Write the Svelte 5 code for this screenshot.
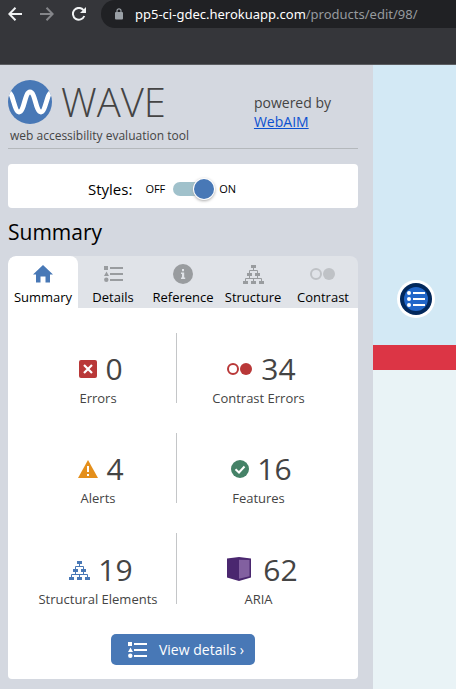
<script>
  const tabs = [
    { id: 'home', label: 'Summary' },
    { id: 'list', label: 'Details' },
    { id: 'info', label: 'Reference' },
    { id: 'tree', label: 'Structure' },
    { id: 'contrast', label: 'Contrast' }
  ];
  const stats = [
    { icon: 'error', value: 0, label: 'Errors' },
    { icon: 'contrast', value: 34, label: 'Contrast Errors' },
    { icon: 'alert', value: 4, label: 'Alerts' },
    { icon: 'feature', value: 16, label: 'Features' },
    { icon: 'tree', value: 19, label: 'Structural Elements' },
    { icon: 'aria', value: 62, label: 'ARIA' }
  ];
  let active = $state('home');
  let styles = $state(true);
</script>

{#snippet icon(name)}
  {#if name === 'home'}
    <svg width="20" height="18" viewBox="0 0 20 18" aria-hidden="true"><path fill="currentColor" d="M10 0 20 9.500H17V17.500H12.500V11.500H7.500V17.500H3V9.500H0Z" /></svg>
  {:else if name === 'list'}
    <svg width="19" height="16" viewBox="0 0 19 16" aria-hidden="true"><path fill="currentColor" d="M0 0H4V4H0ZM2.500 5.500 5 10H0ZM6 1H19V3H6ZM6 7H19V9H6ZM6 13H19V15H6Z" /><circle cx="2.300" cy="13.800" r="2.200" fill="currentColor" /></svg>
  {:else if name === 'info'}
    <svg width="20" height="20" viewBox="0 0 20 20" aria-hidden="true"><circle cx="10" cy="10" r="10" fill="currentColor" /><path fill="#e0e3e8" d="M9 5H11V7.300H9ZM8 8.500H11.200V13.500H12.200V15H8V13.500H9V10H8Z" /></svg>
  {:else if name === 'tree'}
    <svg width="21" height="19" viewBox="0 0 21 19" aria-hidden="true"><path fill="currentColor" d="M8 0H13V3H8ZM4 8H9V11H4ZM12 8H17V11H12ZM0 16H5V19H0ZM8 16H13V19H8ZM16 16H21V19H16Z" /><path fill="none" stroke="currentColor" d="M10.500 3V5.500M6.500 8V5.500H14.500V8M6.500 11V13.500M14.500 11V13.500M2.500 16V13.500H18.500V16M10.500 13.500V16" /></svg>
  {:else if name === 'contrast'}
    <svg width="26" height="12" viewBox="0 0 26 12" aria-hidden="true"><circle cx="6" cy="6" r="5" fill="none" stroke="currentColor" stroke-width="2" /><circle cx="19" cy="6" r="6" fill="currentColor" /></svg>
  {:else if name === 'error'}
    <svg width="18" height="18" viewBox="0 0 18 18" aria-hidden="true"><rect width="18" height="18" rx="2" fill="#b93838" /><path d="M5 5 13 13M13 5 5 13" stroke="#fff" stroke-width="2.200" /></svg>
  {:else if name === 'alert'}
    <svg width="20" height="18" viewBox="0 0 20 18" aria-hidden="true"><path fill="#e48f1b" d="M10 0 20 18H0Z" /><path fill="#fff" d="M9 6H11V12H9ZM9 14H11V16H9Z" /></svg>
  {:else if name === 'feature'}
    <svg width="18" height="18" viewBox="0 0 18 18" aria-hidden="true"><circle cx="9" cy="9" r="9" fill="#458267" /><path d="M4.500 9.200 8 12.500 13.500 6.500" fill="none" stroke="#fff" stroke-width="2" /></svg>
  {:else if name === 'aria'}
    <svg width="24" height="26" viewBox="0 0 24 26" aria-hidden="true"><path fill="#4a276f" d="M0 1.500 12 0 24 1.500V20.500L12 24 0 20.500Z" /><path fill="#8260a0" d="M12 2.800 22.500 3V19.300L12 21.800Z" /></svg>
  {/if}
{/snippet}

<div class="window">
  <header class="chrome">
    <button class="nav" aria-label="Back"><svg width="14" height="14" viewBox="0 0 14 14"><path d="M14 7H1.500M7.500 .8 1.300 7 7.500 13.200" /></svg></button>
    <button class="nav off" aria-label="Forward" disabled><svg width="14" height="14" viewBox="0 0 14 14"><path d="M0 7H12.500M6.500 .8 12.700 7 6.500 13.200" /></svg></button>
    <button class="nav" aria-label="Reload"><svg width="14" height="14" viewBox="0 0 14 14"><path d="M12.300 9A5.900 5.900 0 1 1 11.500 3.200" /><path class="solid" d="M14 0V6H8Z" /></svg></button>
    <div class="address" role="textbox" aria-label="Address" aria-readonly="true" tabindex="0">
      <svg width="8" height="12" viewBox="0 0 8 12" aria-hidden="true"><path d="M2 5V2.800A2 2 0 0 1 6 2.800V5" fill="none" stroke="#9aa0a6" stroke-width="1.200" /><rect y="4" width="8" height="7.500" rx="1" fill="#9aa0a6" /></svg>
      <span class="url">pp5-ci-gdec.herokuapp.com<span class="path">/products/edit/98/</span></span>
    </div>
  </header>

  <div class="body">
    <aside class="wave">
      <div class="brand">
        <div class="logo">
          <div class="mark">
            <svg width="44" height="44" viewBox="0 0 44 44" aria-hidden="true">
              <defs><clipPath id="disc"><circle cx="22" cy="22" r="22" /></clipPath></defs>
              <circle cx="22" cy="22" r="22" fill="#4878b6" />
              <path clip-path="url(#disc)" d="M-1 13H1C5 13 6.500 32 11 32C16.500 32 16.500 12 22 12C27.500 12 27.500 32 33 32C37.500 32 39 13 43 13H45" fill="none" stroke="#fff" stroke-width="4.800" />
            </svg>
            <span class="name">WAVE</span>
          </div>
          <span class="tag">web accessibility evaluation tool</span>
        </div>
        <p class="powered">powered by<br /><a href="#webaim">WebAIM</a></p>
      </div>

      <div class="switch">
        <label class="title" for="styles">Styles:</label>
        <span class="state">OFF</span>
        <input id="styles" type="checkbox" role="switch" bind:checked={styles} />
        <span class="state">ON</span>
      </div>

      <h2>Summary</h2>

      <div class="tabs" role="tablist">
        {#each tabs as tab}
          <button role="tab" class="tab {tab.id}" class:active={active === tab.id} aria-selected={active === tab.id} onclick={() => (active = tab.id)}>
            <span class="glyph">{@render icon(tab.id)}</span>
            {tab.label}
          </button>
        {/each}
      </div>

      <section class="panel">
        <ul class="stats">
          {#each stats as stat}
            <li class="stat {stat.icon}">
              <span class="count">{@render icon(stat.icon)}<span>{stat.value}</span></span>
              <span class="label">{stat.label}</span>
            </li>
          {/each}
        </ul>
        <button class="details">{@render icon('list')}View details ›</button>
      </section>
    </aside>

    <main class="site">
      <div class="hero">
        <button class="menu" aria-label="Structure list">
          <svg width="38" height="38" viewBox="0 0 38 38" aria-hidden="true">
            <circle cx="19" cy="19" r="19" fill="#fff" />
            <circle cx="19" cy="19" r="16" fill="#02285c" />
            <circle cx="19" cy="19" r="12" fill="#2166c9" />
            <g fill="#fff"><circle cx="12" cy="13" r="2" /><circle cx="12" cy="19" r="2" /><circle cx="12" cy="25" r="2" /><path d="M16 12H28V14H16ZM16 18H28V20H16ZM16 24H28V26H16Z" /></g>
          </svg>
        </button>
      </div>
      <div class="stripe"></div>
    </main>
  </div>
</div>

<style>
  :global(body) {
    margin: 0;
  }
  .window {
    display: flex;
    flex-direction: column;
    min-height: 100vh;
    font-family: 'Open Sans', 'Noto Sans', sans-serif;
    color: #000;
  }
  .window *,
  .window *::before {
    box-sizing: border-box;
  }
  button {
    border: 0;
    padding: 0;
    background: none;
    font: inherit;
    color: inherit;
  }
  svg {
    display: block;
    flex: none;
  }
  .chrome {
    display: flex;
    align-items: flex-start;
    height: 65px;
    padding-left: 8px;
    background: #35363a;
    border-bottom: 1px solid #5b5d61;
  }
  .nav {
    width: 14px;
    height: 28px;
    margin-right: 18px;
    color: #f1f3f4;
  }
  .nav.off {
    color: #85868a;
  }
  .nav path {
    fill: none;
    stroke: currentColor;
    stroke-width: 2;
  }
  .nav .solid {
    fill: currentColor;
    stroke: none;
  }
  .address {
    display: flex;
    flex: 1;
    align-items: center;
    gap: 12px;
    min-width: 0;
    height: 28px;
    margin-left: -3px;
    padding-left: 14px;
    background: #202124;
    border-radius: 14px 0 0 14px;
    color: #fff;
    font-family: 'Noto Sans', sans-serif;
    font-size: 13px;
    white-space: nowrap;
  }
  .path {
    color: #969a9e;
  }
  .body {
    display: flex;
    flex: 1;
  }
  .wave {
    flex: none;
    width: 373px;
    padding: 15px 15px 10px 8px;
    background: #d4d8e0;
  }
  .brand {
    display: flex;
    justify-content: space-between;
    height: 69px;
    border-bottom: 1px solid #b4b8bc;
    color: #444;
  }
  .mark {
    display: flex;
    align-items: center;
    gap: 9px;
    height: 44px;
  }
  .name {
    font-size: 40px;
    font-weight: 300;
    line-height: 44px;
  }
  .tag {
    display: block;
    padding: 2px 0 0 2px;
    font-size: 12px;
    line-height: 20px;
  }
  .powered {
    margin: 13px 27px 0 0;
    font-size: 14px;
    line-height: 19px;
  }
  .powered a {
    color: #0b50d0;
  }
  .switch {
    display: flex;
    align-items: center;
    height: 44px;
    margin-top: 15px;
    padding: 5px 0 0 80px;
    background: #fff;
    border-radius: 4px;
  }
  .title {
    margin-right: 13px;
    font-size: 15px;
  }
  .state {
    font-size: 11px;
  }
  .switch input {
    appearance: none;
    position: relative;
    width: 40px;
    height: 14px;
    margin: 0 6px 0 8px;
    background: #a0c1cb;
    border-radius: 7px;
  }
  .switch input::before {
    content: '';
    position: absolute;
    top: -3px;
    left: 0;
    width: 20px;
    height: 20px;
    border-radius: 50%;
    background: #4878b6;
    box-shadow: 0 0 0 1px #fff, 0 1px 3px 1px #aaa;
  }
  .switch input:checked::before {
    left: 21px;
  }
  h2 {
    margin: 8px 0;
    font-size: 21px;
    font-weight: 400;
    line-height: 32px;
  }
  .tabs {
    display: flex;
    overflow: hidden;
    background: #e0e3e8;
    border-radius: 8px 8px 0 0;
  }
  .tab {
    flex: 1 1 0;
    min-width: 0;
    padding-top: 6px;
    height: 52px;
    font-size: 13px;
    line-height: 18px;
    white-space: nowrap;
  }
  .tab.active {
    background: #fff;
    border-radius: 8px 8px 0 0;
  }
  .glyph {
    display: flex;
    align-items: center;
    justify-content: center;
    height: 20px;
    margin-bottom: 4px;
    color: #999c9f;
  }
  .active .glyph {
    color: #4878b6;
  }
  .tab.contrast .glyph {
    color: #bfc2c6;
  }
  .panel {
    padding: 25px 0 14px;
    background: #fff;
    border-radius: 0 0 4px 4px;
  }
  .stats {
    display: grid;
    grid-template-columns: 157px 1fr;
    grid-template-rows: 70px 70px 71px;
    row-gap: 30px;
    margin: 0 0 30px;
    padding: 0 18px 0 12px;
    list-style: none;
    color: #444;
  }
  .stat {
    display: flex;
    flex-direction: column;
    align-items: center;
    justify-content: flex-end;
  }
  .stat:nth-child(odd) {
    border-right: 1px solid #c4c6c8;
  }
  .count {
    display: flex;
    align-items: center;
    gap: 8px;
    padding-left: 6px;
    font-size: 30px;
    line-height: 36px;
  }
  .stat.contrast svg {
    color: #b93838;
  }
  .stat.tree svg {
    color: #4878b6;
  }
  .stat.aria .count {
    gap: 12px;
    padding-left: 8px;
  }
  .label {
    margin: 2px 0 -4px;
    font-size: 13px;
    line-height: 18px;
  }
  .details {
    display: flex;
    align-items: center;
    gap: 12px;
    height: 31px;
    margin: 0 auto;
    padding: 0 11px 0 17px;
    background: #4878b6;
    border-radius: 5px;
    color: #fff;
    font-size: 14px;
  }
  .site {
    display: flex;
    flex: 1;
    flex-direction: column;
    min-width: 0;
    background: #e9f3f6;
  }
  .hero {
    display: flex;
    justify-content: center;
    height: 280px;
    padding: 215px 0 0 3px;
    background: #d3e9f5;
  }
  .menu {
    height: 38px;
  }
  .stripe {
    height: 25px;
    background: #dc3545;
  }
</style>
